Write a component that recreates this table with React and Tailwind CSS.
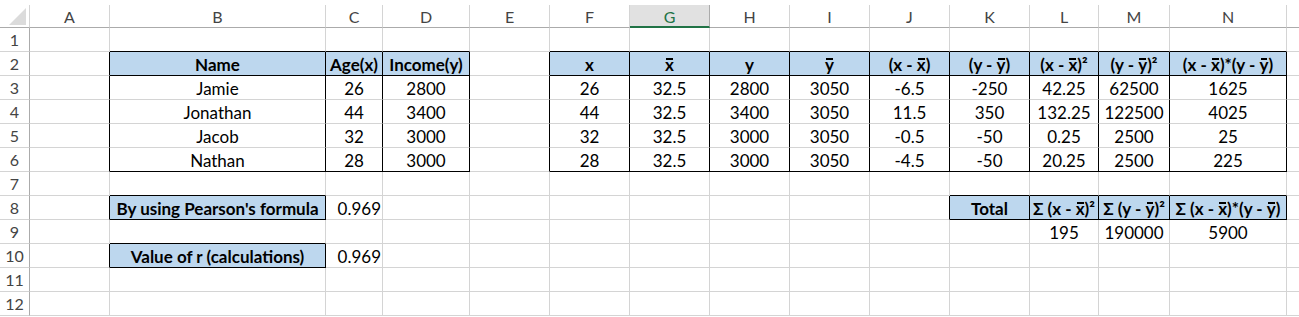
import React from "react";

// column letters of the sheet, index 1..14; index 15 is the partial column at the right edge
const COLS = ["A", "B", "C", "D", "E", "F", "G", "H", "I", "J", "K", "L", "M", "N"];
const col = (letter) => COLS.indexOf(letter) + 1;

// boxed ranges that get thin black borders on every edge
const BOXES = [
  { r1: 2, r2: 6, c1: col("B"), c2: col("D") },
  { r1: 2, r2: 6, c1: col("F"), c2: col("N") },
  { r1: 8, r2: 8, c1: col("B"), c2: col("B") },
  { r1: 10, r2: 10, c1: col("B"), c2: col("B") },
  { r1: 8, r2: 8, c1: col("K"), c2: col("N") },
];

const blackRight = (r, c) =>
  BOXES.some((b) => r >= b.r1 && r <= b.r2 && c >= b.c1 - 1 && c <= b.c2);

const blackBottom = (r, c) =>
  BOXES.some(
    (b) =>
      c >= b.c1 &&
      c <= b.c2 &&
      (r === b.r1 - 1 || r === b.r1 || r === b.r2)
  );

const Bar = ({ children }) => (
  <span className="relative inline-block">
    {children}
    <span className="absolute left-[1px] right-[1px] top-[3px] h-[2px] bg-black" />
  </span>
);

const XB = () => <Bar>x</Bar>;
const YB = () => <Bar>y</Bar>;

const cells = {};
const put = (ref, v, opts = {}) => {
  cells[ref] = { v, ...opts };
};

// left table
put("B2", "Name", { head: true });
put("C2", "Age(x)", { head: true });
put("D2", "Income(y)", { head: true });

// right table headers
put("F2", "x", { head: true });
put("G2", <XB />, { head: true });
put("H2", "y", { head: true });
put("I2", <YB />, { head: true });
put("J2", <>(x - <XB />)</>, { head: true });
put("K2", <>(y - <YB />)</>, { head: true });
put("L2", <>(x - <XB />)²</>, { head: true });
put("M2", <>(y - <YB />)²</>, { head: true });
put("N2", <>(x - <XB />)*(y - <YB />)</>, { head: true });

const people = [
  ["Jamie", 26, 2800, "-6.5", "-250", "42.25", "62500", "1625"],
  ["Jonathan", 44, 3400, "11.5", "350", "132.25", "122500", "4025"],
  ["Jacob", 32, 3000, "-0.5", "-50", "0.25", "2500", "25"],
  ["Nathan", 28, 3000, "-4.5", "-50", "20.25", "2500", "225"],
];

people.forEach(([name, age, income, dx, dy, dx2, dy2, prod], i) => {
  const r = i + 3;
  put("B" + r, name);
  put("C" + r, age);
  put("D" + r, income);
  put("F" + r, age);
  put("G" + r, "32.5");
  put("H" + r, income);
  put("I" + r, "3050");
  put("J" + r, dx);
  put("K" + r, dy);
  put("L" + r, dx2);
  put("M" + r, dy2);
  put("N" + r, prod);
});

put("B8", "By using Pearson's formula", { head: true });
put("C8", "0.969", { right: true });
put("B10", "Value of r (calculations)", { head: true });
put("C10", "0.969", { right: true });

put("K8", "Total", { head: true });
put("L8", <>Σ (x - <XB />)²</>, { head: true });
put("M8", <>Σ (y - <YB />)²</>, { head: true });
put("N8", <>Σ (x - <XB />)*(y - <YB />)</>, { head: true });
put("L9", "195");
put("M9", "190000");
put("N9", "5900");

const Corner = () => (
  <div className="h-[23px] border-r border-b border-r-[#d4d4d4] border-b-[#ababab] flex items-end justify-end pr-[3px] pb-[2px]">
    <svg width="17" height="17" viewBox="0 0 17 17">
      <polygon points="17,0 17,17 0,17" fill="#dbdbdb" />
    </svg>
  </div>
);

const ColHead = ({ letter }) => {
  if (letter === "G") {
    return (
      <div className="h-[23px] bg-[#e1e1e1] border-r border-r-[#ababab] border-b-2 border-b-[#217346] flex items-center justify-center text-[16px] text-[#217346] pt-[2px]">
        {letter}
      </div>
    );
  }
  return (
    <div className="h-[23px] border-r border-b border-r-[#d4d4d4] border-b-[#ababab] flex items-center justify-center text-[16px] text-[#444] pt-[1px]">
      {letter}
    </div>
  );
};

const Cell = ({ r, c }) => {
  const ref = COLS[c - 1] + r;
  const cell = cells[ref];
  const right = blackRight(r, c) ? "border-r-black" : "border-r-[#d4d4d4]";
  const bottom = blackBottom(r, c) ? "border-b-black" : "border-b-[#d4d4d4]";
  const fill = cell?.head ? "bg-[#bdd7ee] font-bold" : "bg-white";
  const align = cell?.right ? "justify-end pr-[1px]" : "justify-center";
  return (
    <div
      className={`h-6 border-r border-b ${right} ${bottom} ${fill} ${align} flex items-end whitespace-nowrap leading-[20px] text-[17px] text-black`}
    >
      {cell ? <span>{cell.v}</span> : null}
    </div>
  );
};

export default function App() {
  const rows = Array.from({ length: 12 }, (_, i) => i + 1);
  return (
    <div
      className="w-[1299px] h-[317px] overflow-hidden bg-white pt-[5px]"
      style={{ fontFamily: "Lato, 'Noto Sans', 'DejaVu Sans', sans-serif" }}
    >
      <div className="grid grid-cols-[30px_80px_216px_57px_87px_80px_80px_80px_80px_80px_80px_80px_69px_71px_117px_12px]">
        <Corner />
        {COLS.map((letter) => (
          <ColHead key={letter} letter={letter} />
        ))}
        <div className="h-[23px] border-b border-b-[#ababab]" />

        {rows.map((r) => (
          <React.Fragment key={r}>
            <div className="h-6 border-r border-b border-r-[#ababab] border-b-[#d4d4d4] flex items-end justify-center pb-[1px] leading-[20px] text-[16px] text-[#444]">
              {r}
            </div>
            {COLS.map((_, i) => (
              <Cell key={i} r={r} c={i + 1} />
            ))}
            <div className="h-6 border-b border-b-[#d4d4d4]" />
          </React.Fragment>
        ))}
      </div>
    </div>
  );
}
